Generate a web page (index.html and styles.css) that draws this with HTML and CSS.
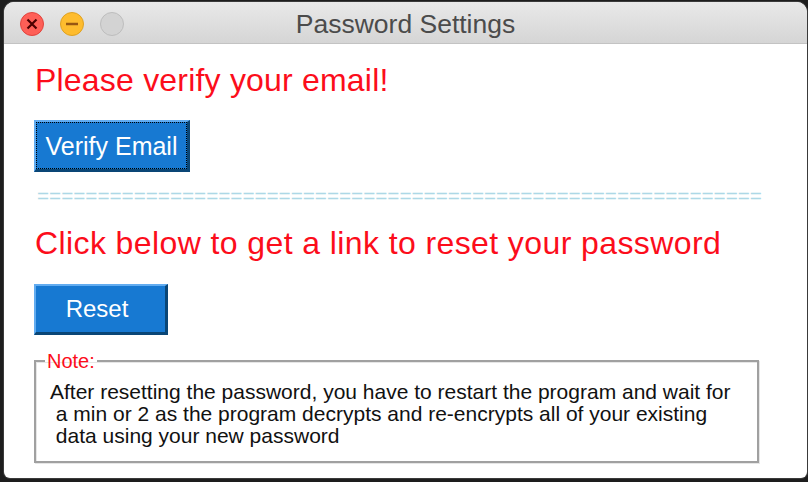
FILE: index.html
```html
<!DOCTYPE html>
<html>
<head>
<meta charset="utf-8">
<title>Password Settings</title>
<link rel="stylesheet" href="styles.css">
</head>
<body>
<div class="window">
  <div class="titlebar">
    <div class="lights">
      <span class="light close">
        <svg viewBox="0 0 24 24" width="24" height="24"><path d="M7.5 7.5 L16.5 16.5 M16.5 7.5 L7.5 16.5" stroke="#4d0000" stroke-width="2.2" fill="none"/></svg>
      </span>
      <span class="light min">
        <svg viewBox="0 0 24 24" width="24" height="24"><path d="M6 12 H18" stroke="#985712" stroke-width="2.4" fill="none"/></svg>
      </span>
      <span class="light zoom"></span>
    </div>
    <div class="title">Password Settings</div>
    <div></div>
  </div>
  <div class="content">
    <div class="heading first">Please verify your email!</div>
    <div class="btn-row"><button class="btn verify"><span class="focus">Verify Email</span></button></div>
    <div class="separator">============================================================</div>
    <div class="heading second">Click below to get a link to reset your password</div>
    <div class="btn-row"><button class="btn reset">Reset</button></div>
    <fieldset class="note">
      <legend class="note-legend">Note:</legend>
      <div class="note-text">After resetting the password, you have to restart the program and wait for
 a min or 2 as the program decrypts and re-encrypts all of your existing
 data using your new password</div>
    </fieldset>
  </div>
</div>
</body>
</html>
```
FILE: styles.css
```css
html, body {
  margin: 0;
  height: 100%;
}
body {
  background: #1d1d1d;
  padding: 2px 1px 4px 4px;
  box-sizing: border-box;
  font-family: "Liberation Sans", Arial, sans-serif;
}
.window {
  height: 476px;
  background: #ffffff;
  border-radius: 10px 10px 6px 6px;
  overflow: hidden;
  display: flex;
  flex-direction: column;
  box-shadow: 0 0 0 1px #3a3a3a;
}
.titlebar {
  height: 41px;
  flex: none;
  border-bottom: 1px solid #c3c3c3;
  background: linear-gradient(#e9e9e9, #d5d5d5);
  display: grid;
  grid-template-columns: 1fr auto 1fr;
  align-items: center;
}
.lights {
  display: flex;
  gap: 16px;
  padding-left: 16px;
  padding-top: 1px;
}
.light {
  width: 22px;
  height: 22px;
  border-radius: 50%;
  display: flex;
  align-items: center;
  justify-content: center;
  position: relative;
}
.light svg {
  position: absolute;
  left: -1px;
  top: -1px;
}
.close {
  background: #fe5f57;
  border: 1px solid #e0443e;
}
.min {
  background: #febc2e;
  border: 1px solid #dea123;
}
.zoom {
  background: #d3d3d3;
  border: 1px solid #bdbdbd;
}
.title {
  font-size: 26.5px;
  color: #4b4b4b;
  line-height: 41px;
  padding-top: 2px;
  white-space: nowrap;
}
.content {
  flex: 1;
  padding: 0 0 0 30px;
  display: flex;
  flex-direction: column;
  align-items: flex-start;
}
.heading {
  font-size: 32px;
  line-height: 37px;
  color: #fc0d1b;
  margin-left: 1px;
  white-space: nowrap;
}
.heading.first {
  margin-top: 18px;
  letter-spacing: 0.2px;
}
.heading.second {
  margin-top: 17px;
  letter-spacing: 0.4px;
}
.btn-row {
  display: flex;
}
.btn {
  font-family: "Liberation Sans", Arial, sans-serif;
  font-size: 24px;
  color: #ffffff;
  background: #1779d2;
  border-style: solid;
  border-width: 2px 3px 3px 2px;
  border-color: #62acf0 #0a4676 #0a4676 #62acf0;
  margin: 0;
  padding: 0;
  box-sizing: border-box;
  cursor: default;
}
.verify {
  margin-top: 21px;
  width: 156px;
  height: 52px;
  padding: 0;
  display: flex;
  font-size: 25px;
}
.focus {
  flex: 1;
  display: flex;
  align-items: center;
  justify-content: center;
  border: 1px dotted #000000;
  padding-top: 1px;
}
.reset {
  margin-top: 22px;
  width: 134px;
  height: 51px;
  padding: 0 7px 0 0;
}
.separator {
  margin-top: 12px;
  margin-left: 3px;
  font-size: 20.7px;
  line-height: 24px;
  color: #add8e6;
  white-space: nowrap;
}
.note {
  margin: 15px 0 0 0;
  width: 725px;
  box-sizing: border-box;
  border: 2px solid #a0a0a0;
  box-shadow: inset 1px 1px 0 #e6e6e6, 1px 1px 0 #e6e6e6;
  padding: 9px 0 14px 0;
}
.note-legend {
  font-size: 20px;
  line-height: 22px;
  color: #fc0d1b;
  padding: 0 2px;
  margin-left: 9px;
}
.note-text {
  font-size: 21px;
  line-height: 22px;
  color: #111111;
  white-space: pre;
  padding-left: 14px;
}
```
